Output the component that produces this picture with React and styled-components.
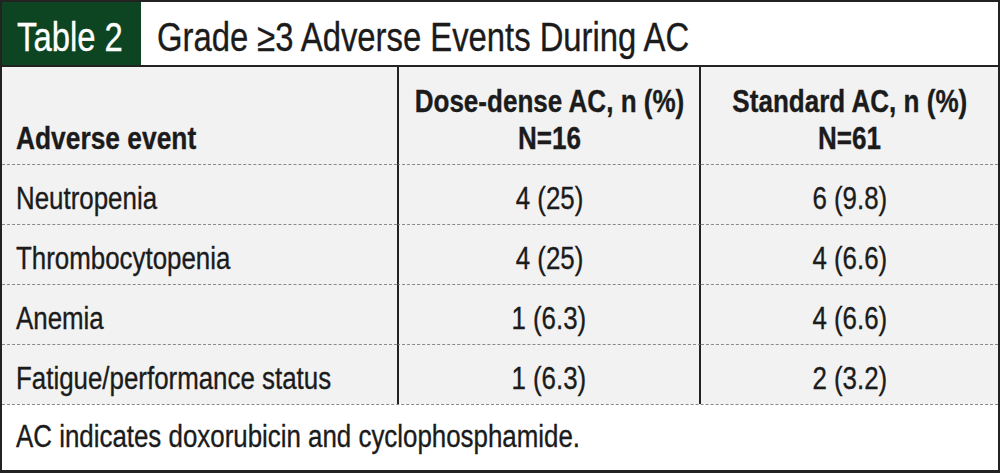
import React from 'react';
import styled, { createGlobalStyle } from 'styled-components';

const GlobalStyle = createGlobalStyle`
  html, body {
    margin: 0;
    padding: 0;
    background: #ffffff;
  }
  body {
    font-family: 'Liberation Sans', Arial, sans-serif;
    color: #1b1b1b;
  }
`;

const rows = [
  { event: 'Neutropenia', dense: '4 (25)', standard: '6 (9.8)' },
  { event: 'Thrombocytopenia', dense: '4 (25)', standard: '4 (6.6)' },
  { event: 'Anemia', dense: '1 (6.3)', standard: '4 (6.6)' },
  { event: 'Fatigue/performance status', dense: '1 (6.3)', standard: '2 (3.2)' },
];

// condensed face: no narrow font is installed, so squeeze the regular one
const Narrow = styled.span`
  display: inline-block;
  white-space: nowrap;
  -webkit-text-stroke: 0.35px currentColor;
  transform: scaleX(${(p) => p.$scale || 0.835});
  transform-origin: ${(p) => (p.$center ? 'center' : 'left')} center;
`;

const App = () => {
  return (
    <>
      <GlobalStyle />
      <Frame>
        <TitleBar>
          <Label><Narrow $scale={0.82}>Table 2</Narrow></Label>
          <Title><Narrow $scale={0.82}>Grade ≥3 Adverse Events During AC</Narrow></Title>
        </TitleBar>
        <Body>
          <HeadRow>
            <HeadCell><Narrow $scale={0.85}>Adverse event</Narrow></HeadCell>
            <HeadCell $mid $center>
              <Narrow $center $scale={0.84}>Dose-dense AC, n (%)</Narrow>
              <Narrow $center $scale={0.84}>N=16</Narrow>
            </HeadCell>
            <HeadCell $center>
              <Narrow $center $scale={0.84}>Standard AC, n (%)</Narrow>
              <Narrow $center $scale={0.84}>N=61</Narrow>
            </HeadCell>
          </HeadRow>
          {rows.map((row) => (
            <Row key={row.event}>
              <Cell><Narrow>{row.event}</Narrow></Cell>
              <Cell $mid $center><Narrow $center>{row.dense}</Narrow></Cell>
              <Cell $center><Narrow $center>{row.standard}</Narrow></Cell>
            </Row>
          ))}
        </Body>
        <Footer><Narrow>AC indicates doxorubicin and cyclophosphamide.</Narrow></Footer>
      </Frame>
    </>
  );
};

const Frame = styled.div`
  box-sizing: border-box;
  width: 1000px;
  height: 473px;
  border: 2px solid #222222;
  border-bottom-width: 3px;
  display: flex;
  flex-direction: column;
  overflow: hidden;
`;

const TitleBar = styled.div`
  display: flex;
  height: 63px;
  border-bottom: 2px solid #222222;
  font-size: 40px;
  line-height: 40px;
`;

const Label = styled.div`
  width: 124px;
  margin-top: -2px;
  margin-left: -2px;
  padding: 17px 0 0 17px;
  background: #0d4421;
  color: #ffffff;
  white-space: nowrap;
`;

const Title = styled.div`
  flex: 1;
  padding: 15px 0 0 16px;
  background: #ffffff;
  white-space: nowrap;
`;

const Body = styled.div`
  background: #f2f2f2;
  font-size: 31px;
  line-height: 37px;
`;

const columns = `
  display: grid;
  grid-template-columns: 395px 304px 1fr;
`;

const HeadRow = styled.div`
  ${columns}
  height: 97px;
  font-weight: bold;
`;

const HeadCell = styled.div`
  box-sizing: border-box;
  display: flex;
  flex-direction: column;
  justify-content: flex-end;
  align-items: ${(p) => (p.$center ? 'center' : 'flex-start')};
  padding: 0 ${(p) => (p.$center ? '0' : '14px')} 7px;
  border-left: ${(p) => (p.$mid ? '2px solid #222222' : 'none')};
  border-right: ${(p) => (p.$mid ? '2px solid #222222' : 'none')};
`;

const Row = styled.div`
  ${columns}
  height: 60px;
`;

const Cell = styled.div`
  box-sizing: border-box;
  border-top: 1px dashed #8a8a8a;
  padding: 15px ${(p) => (p.$center ? '0' : '14px')} 0;
  text-align: ${(p) => (p.$center ? 'center' : 'left')};
  border-left: ${(p) => (p.$mid ? '2px solid #222222' : 'none')};
  border-right: ${(p) => (p.$mid ? '2px solid #222222' : 'none')};
`;

const Footer = styled.div`
  flex: 1;
  border-top: 1px dashed #8a8a8a;
  padding: 13px 14px 0;
  font-size: 31px;
  line-height: 37px;
  background: #ffffff;
`;

export default App;
